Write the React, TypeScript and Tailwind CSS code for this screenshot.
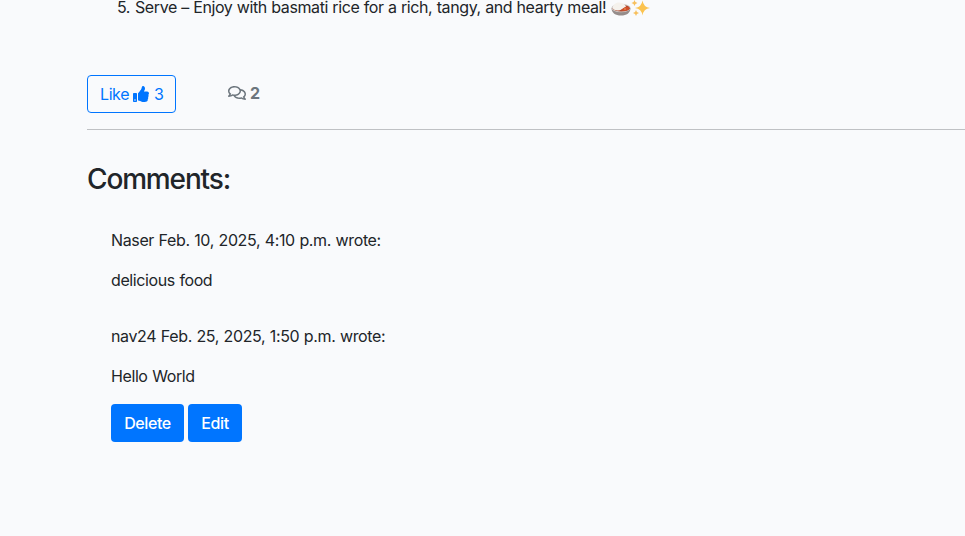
import React from "react";
import { FaRegComments, FaThumbsUp } from "react-icons/fa";

function Comment({ meta, text }: { meta: string; text: string }) {
  return (
    <div className="flex flex-col gap-4">
      <p className="tracking-[-0.36px] [word-spacing:0.4px]">{meta}</p>
      <p className="tracking-[-0.4px] [word-spacing:0.5px]">{text}</p>
    </div>
  );
}

export default function App() {
  return (
    <main className="min-h-[536px] whitespace-nowrap bg-[#f9fafc] pl-[87px] font-['Inter','Liberation_Sans',sans-serif] text-base leading-6 text-[#212529]">
      <div className="flex h-[19px] items-start pl-[30px]">
        <span className="w-[18px] leading-[14px] tracking-[-0.6px]">5.</span>
        <span className="w-[476px] leading-[14px] tracking-[-0.4px] [word-spacing:0.28px]">Serve – Enjoy with basmati rice for a rich, tangy, and hearty meal!</span>
        <svg className="h-[19px] w-10 shrink-0" viewBox="0 0 40 19">
          <path d="M.5 8c0 5 4 7.500 9.500 7.500s9.500-2.500 9.500-7.500z" fill="#958c8a" />
          <ellipse cx="10" cy="8" rx="9.600" ry="4.200" fill="#d3cfcd" />
          <ellipse cx="10.300" cy="8.200" rx="8.500" ry="3.300" fill="#b04a2e" />
          <path d="M1.800 8.500C1.500 5 4.500 2.500 8 2.500c3.500 0 6 2 7 4-1 1.500-3 1.800-4.500 3-2.500 1.700-7.500 1-8.700-1z" fill="#f5f2ed" />
          <path d="M10 10c2-1 3-3.300 5.500-3.300 1.800 0 3 .8 3 1.700-.8 2.500-6.500 3-8.500 1.600z" fill="#cf4f2c" />
          <circle cx="14" cy="9" r=".8" fill="#efa65a" />
          <path d="M31.500.5q.9 6.600 7.500 7.500-6.600.9-7.500 7.500-.9-6.600-7.500-7.500 6.600-.9 7.500-7.500z" fill="#fbc350" />
          <path d="M23.500 0q.4 2.600 3 3-2.600.4-3 3-.4-2.600-3-3 2.600-.4 3-3zM25 10q.4 2.600 3 3-2.600.4-3 3-.4-2.600-3-3 2.600-.4 3-3z" fill="#f7bf5c" />
        </svg>
      </div>
      <div className="mt-14 flex h-[38px] items-center">
        <button className="flex h-[38px] w-[89px] items-center rounded border border-[#0075ff] pl-3 text-[#0075ff]">
          <span className="w-[33px] text-left tracking-[-0.4px]">Like</span>
          <FaThumbsUp className="size-4" />
          <span className="ml-[5px]">3</span>
        </button>
        <div className="-mt-0.5 ml-[52px] flex items-center gap-1 font-bold text-[#6c757d]">
          <FaRegComments className="h-4 w-[18px]" />
          <span>2</span>
        </div>
      </div>
      <hr className="mt-4 border-t border-[#bfc1c4]" />
      <h3 className="mt-8 h-[34px] text-[28px] font-medium leading-[35px] tracking-[-1.15px]">Comments:</h3>
      <div className="mt-8 pl-6">
        <Comment meta="Naser Feb. 10, 2025, 4:10 p.m. wrote:" text="delicious food" />
        <div className="mt-8">
          <Comment meta="nav24 Feb. 25, 2025, 1:50 p.m. wrote:" text="Hello World" />
        </div>
        <div className="mt-4 flex gap-1">
          <button className="h-[38px] w-[73px] rounded bg-[#0075ff] font-medium tracking-[-0.4px] text-white">Delete</button>
          <button className="h-[38px] w-[54px] rounded bg-[#0075ff] font-medium tracking-[-0.4px] text-white">Edit</button>
        </div>
      </div>
    </main>
  );
}
